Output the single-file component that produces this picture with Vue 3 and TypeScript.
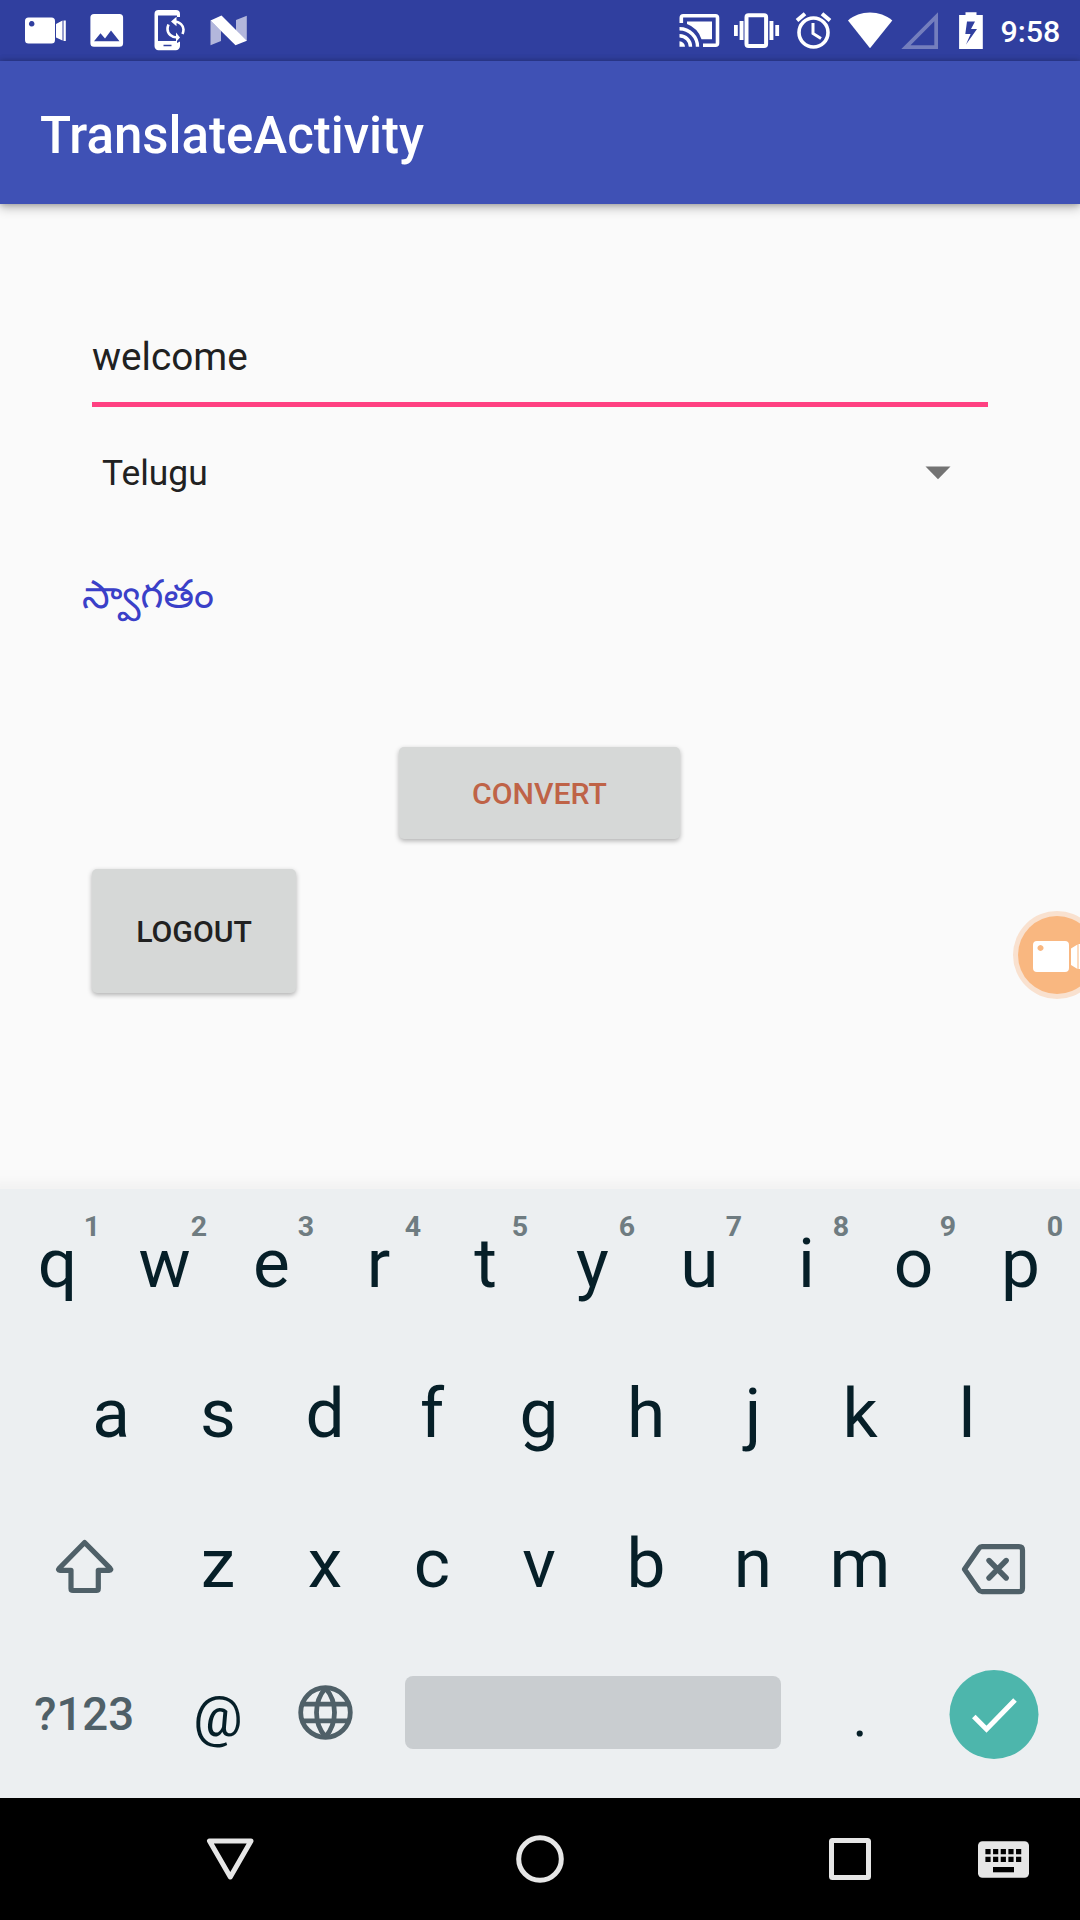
<script setup lang="ts">
import { ref } from 'vue'

interface Key {
  label: string
  hint?: string
}

const phrase = ref('welcome')
const language = ref('Telugu')
const translation = ref('స్వాగతం')

const topRow: Key[] = 'qwertyuiop'.split('').map((label, i) => ({ label, hint: String((i + 1) % 10) }))
const homeRow: Key[] = 'asdfghjkl'.split('').map((label) => ({ label }))
const bottomRow: Key[] = 'zxcvbnm'.split('').map((label) => ({ label }))
</script>

<template>
  <div class="screen">
    <header class="status">
      <div class="icons">
        <svg width="60" height="61" viewBox="20 0 60 61">
          <path fill="#fff" fill-rule="evenodd" d="M28.5 17.5h23a3.5 3.5 0 0 1 3.5 3.5v19a3.5 3.5 0 0 1-3.5 3.5h-23A3.5 3.5 0 0 1 25 40V21a3.500 3.500 0 0 1 3.500-3.500zM31.700 21a2.800 2.800 0 1 0 .01 0zM56 24l6.500-3.500v20L56 37.500zM63.500 20.500h2.300v20.500h-2.300z" />
        </svg>
        <svg width="60" height="61" viewBox="80 0 60 61">
          <path fill="#fff" fill-rule="evenodd" d="M94 14h25.500a3.600 3.600 0 0 1 3.600 3.600v25.600a3.600 3.600 0 0 1-3.600 3.600H94a3.600 3.600 0 0 1-3.600-3.600V17.600A3.600 3.600 0 0 1 94 14zM94 41.300h25.500L111 30.500l-6 8-4.500-5.200z" />
        </svg>
        <svg width="60" height="61" viewBox="140 0 60 61">
          <path fill="#fff" fill-rule="evenodd" d="M158.500 10h17.500a4 4 0 0 1 4 4v3h-3v-1.500h-19V41h19v2l3-1.500V46a4.200 4.200 0 0 1-4.200 4.200h-17.300A4 4 0 0 1 154.500 46V14a4 4 0 0 1 4-4zM163.500 44.700v1.600h8v-1.600z" />
          <g fill="none" stroke="#fff" stroke-width="2.600">
            <path d="M174 21.500c6 0 9.500 4.500 9.500 8 0 1.500-.4 3-1 4.500M177.500 37.500c-6 0-10-4-10-8.500 0-1.500.4-3 1-4.500" />
          </g>
          <path fill="#fff" d="M171 21.500l5.500-4.800v9.600zM180 37.500l-4-5v9.500z" />
        </svg>
        <svg width="60" height="61" viewBox="200 0 60 61">
          <path fill="#b3b7dc" d="M210.500 20.500l10.500 10v10.500l-10.500 4.300zM236 20l10.800-4.300V41L236 30.500z" />
          <path fill="#fff" d="M210.500 20.500L221.500 15.500 246.800 40.700 235.500 45.300z" />
        </svg>
      </div>
      <div class="icons">
        <svg width="56" height="61" viewBox="670 0 56 61">
          <path fill="none" stroke="#fff" stroke-width="3.600" d="M681.300 23v-5.200a2 2 0 0 1 2-2h32.200a2 2 0 0 1 2 2v25.400a2 2 0 0 1-2 2H703" />
          <path fill="#fff" d="M687 21.500h25V39.300h-10.500A24 24 0 0 0 687 24zM679.500 41.300a5.500 5.500 0 0 1 5.500 5.500h-5.500z" />
          <path fill="none" stroke="#fff" stroke-width="3.400" d="M679.500 35.700a11 11 0 0 1 11 11.100M679.500 28.700a18 18 0 0 1 18 18.100" />
        </svg>
        <svg width="62" height="61" viewBox="726 0 62 61">
          <rect x="746.500" y="15.200" width="19.600" height="30.800" rx="2" fill="none" stroke="#fff" stroke-width="4" />
          <path fill="#fff" d="M734 25h3.800v11H734zM739.600 21h3.900v19h-3.900zM769.500 21h3.900v19h-3.900zM775.300 25h3.800v11h-3.800z" />
        </svg>
        <svg width="54" height="61" viewBox="788 0 54 61">
          <circle cx="813.500" cy="32.500" r="14.500" fill="none" stroke="#fff" stroke-width="3.600" />
          <path fill="none" stroke="#fff" stroke-width="3" d="M813 23v10.500l8 5" />
          <path fill="none" stroke="#fff" stroke-width="4" d="M797 20.500l8-6.700M822 13.800l8 6.700" />
        </svg>
        <svg width="54" height="61" viewBox="842 0 54 61">
          <path fill="#fff" d="M870 48.300L848 20.400c6-5 13.500-7.900 22-7.900s16 2.900 22.300 7.900z" />
        </svg>
        <svg width="50" height="61" viewBox="896 0 50 61">
          <path fill="#747ebd" fill-rule="evenodd" d="M938 12.300V49h-36.700zM934.300 21.300L910.500 45.200h23.800z" />
        </svg>
        <svg width="49" height="61" viewBox="946 0 49 61">
          <path fill="#fff" fill-rule="evenodd" d="M965.500 12.300h11V15h6.300v34h-23.700V15h6.400zM967 21.500l-1.700 12.500h5.300L966 44.500 977 29h-6l4-7.500z" />
        </svg>
      </div>
      <span class="clock">9:58</span>
    </header>

    <div class="appbar"><h1>TranslateActivity</h1></div>

    <main class="content">
      <div class="field">{{ phrase }}</div>
      <div class="spinner">
        <span>{{ language }}</span>
        <svg width="26" height="14" viewBox="0 0 26 14"><path fill="#737373" d="M.5.500h25L13 13.200z" /></svg>
      </div>
      <p class="result">{{ translation }}</p>
      <button class="btn convert">CONVERT</button>
      <button class="btn logout">LOGOUT</button>
    </main>

    <svg class="bubble" width="68" height="90" viewBox="1012 910 68 90">
      <circle cx="1057" cy="955" r="44" fill="#f9e1cf" />
      <circle cx="1057" cy="955" r="39" fill="#f9b780" />
      <path fill="#fff" fill-rule="evenodd" d="M1037 941h28a4 4 0 0 1 4 4v23a4 4 0 0 1-4 4h-28a4 4 0 0 1-4-4v-23a4 4 0 0 1 4-4zM1040.500 945a3 3 0 1 0 .01 0zM1071 948.500l6.500-4v24.500l-6.500-4zM1078.500 944h2v25h-2z" />
    </svg>

    <section class="keyboard">
      <div class="row first">
        <div v-for="k in topRow" :key="k.label" class="key">
          {{ k.label }}<span class="hint">{{ k.hint }}</span>
        </div>
      </div>
      <div class="row">
        <div v-for="k in homeRow" :key="k.label" class="key">{{ k.label }}</div>
      </div>
      <div class="row">
        <div class="key wide">
          <svg width="80" height="80" viewBox="44 1523 80 80">
            <path fill="none" stroke="#4f6068" stroke-width="5.200" stroke-linejoin="round" d="M84.600 1542.500L59.300 1568.200Q57.500 1570.300 60 1570.300H71v18.200q0 2 2 2h23.300q2 0 2-2v-18.200h11q2.500 0 .7-2.100z" />
          </svg>
        </div>
        <div v-for="k in bottomRow" :key="k.label" class="key">{{ k.label }}</div>
        <div class="key wide">
          <svg width="80" height="80" viewBox="954.500 1523 80 80">
            <path fill="none" stroke="#4f6068" stroke-width="5.200" stroke-linejoin="round" d="M982.500 1546.700h37q3.500 0 3.500 3.500v38q0 3.500-3.500 3.500h-37q-2 0-3.200-1.800L965 1569.300l14.300-20.800q1.200-1.800 3.200-1.800z" />
            <path fill="none" stroke="#4f6068" stroke-width="5.400" stroke-linecap="round" d="M989.500 1560.500l17.200 17.500M1006.700 1560.500l-17.200 17.500" />
          </svg>
        </div>
      </div>
      <div class="row">
        <div class="key wide symbols">?123</div>
        <div class="key small">@</div>
        <div class="key">
          <svg width="80" height="80" viewBox="285 1673 80 80">
            <g fill="none" stroke="#4f6068" stroke-width="4.800">
              <circle cx="325.500" cy="1712.500" r="24.800" />
              <path d="M303 1704.200h45M303 1720.800h45M325.500 1688q-9 10.500-9 24.500t9 24.500M325.500 1688q9 10.500 9 24.500t-9 24.500" />
            </g>
          </svg>
        </div>
        <div class="key space"><span class="bar"></span></div>
        <div class="key small">.</div>
        <div class="key wide">
          <svg width="100" height="100" viewBox="944.500 1663 100 100">
            <circle cx="994.500" cy="1714.500" r="44.500" fill="#4db6ac" />
            <path fill="none" stroke="#fff" stroke-width="5" d="M974.300 1716.500l12.700 12.800 28.500-29.300" />
          </svg>
        </div>
      </div>
    </section>

    <nav class="navbar">
      <svg width="80" height="122" viewBox="190 1798 80 122">
        <path fill="none" stroke="#e6e6e6" stroke-width="5" stroke-linejoin="round" d="M209.500 1841h41.500l-20.700 36z" />
      </svg>
      <svg width="80" height="122" viewBox="500 1798 80 122">
        <circle cx="540" cy="1859" r="21.300" fill="none" stroke="#e6e6e6" stroke-width="5" />
      </svg>
      <svg width="80" height="122" viewBox="810 1798 80 122">
        <rect x="831.500" y="1840.500" width="37" height="37" rx="1" fill="none" stroke="#e6e6e6" stroke-width="5" />
      </svg>
      <svg class="ime" width="80" height="122" viewBox="964 1798 80 122">
        <rect x="978" y="1841.300" width="51" height="36.500" rx="4.500" fill="#e6e6e6" />
        <path stroke="#000" stroke-width="5.200" stroke-dasharray="5.200 2.460" d="M985.400 1851.600h36M985.400 1859.300h36" />
        <path fill="#000" d="M993 1867h21v5.300h-21z" />
      </svg>
    </nav>
  </div>
</template>

<style>
body {
  margin: 0;
}
</style>

<style scoped>
.screen {
  position: relative;
  display: flex;
  flex-direction: column;
  width: 1080px;
  height: 1920px;
  overflow: hidden;
  background: #fafafa;
  font-family: Roboto, "Noto Sans Telugu", "Noto Sans", sans-serif;
  color: #212121;
}
svg {
  display: block;
  flex: none;
}
.status {
  display: flex;
  height: 61px;
  flex: none;
  padding-left: 20px;
  background: #303f9f;
  color: #fff;
}
.icons {
  display: flex;
}
.icons + .icons {
  margin-left: 410px;
}
.clock {
  margin-left: 5.500px;
  font-size: 30.400px;
  font-weight: 500;
  line-height: 63px;
  white-space: nowrap;
}
.appbar {
  height: 143px;
  flex: none;
  background: #3f51b5;
  box-shadow: 0 0 6px rgba(0, 0, 0, 0.25), 0 4px 10px rgba(0, 0, 0, 0.25);
}
h1 {
  margin: 0;
  padding-left: 40px;
  color: #fff;
  font-size: 51px;
  font-weight: 500;
  line-height: 150px;
}
.content {
  display: flex;
  flex-direction: column;
  align-items: flex-start;
  height: 985px;
  flex: none;
}
.field {
  box-sizing: border-box;
  width: 896px;
  height: 98px;
  margin: 105px 0 0 92px;
  border-bottom: 5px solid #ff4081;
  font-size: 38.700px;
  line-height: 96px;
}
.spinner {
  display: flex;
  align-items: center;
  justify-content: space-between;
  width: 849px;
  height: 60px;
  margin: 36px 0 0 102px;
  font-size: 35.400px;
}
.result {
  margin: 62px 0 0 82px;
  height: 65px;
  color: #3a40c8;
  font-size: 39.300px;
  line-height: 60px;
}
.btn {
  padding: 0;
  border: 0;
  border-radius: 5px;
  background: #d6d8d7;
  box-shadow: 0 2px 5px rgba(0, 0, 0, 0.3);
  color: #212121;
  font: 500 30.200px Roboto, sans-serif;
}
.convert {
  width: 281px;
  height: 92px;
  margin: 117px 0 0 399px;
  color: #bf6347;
}
.logout {
  width: 204px;
  height: 124px;
  margin: 30px 0 0 92px;
}
.bubble {
  position: absolute;
  right: 0;
  top: 910px;
}
.keyboard {
  height: 609px;
  flex: none;
  background: #eceff1;
  box-shadow: 0 -2px 8px 6px rgba(0, 0, 0, 0.03);
}
.row {
  display: flex;
  justify-content: center;
  height: 150px;
  padding-right: 2px;
}
.row.first {
  height: 149px;
}
.key {
  position: relative;
  display: flex;
  align-items: center;
  justify-content: center;
  width: 107px;
  color: #061f28;
  font-size: 69.400px;
}
.hint {
  position: absolute;
  top: 22px;
  right: 9px;
  width: 20px;
  color: #6f7c81;
  font-size: 28.500px;
  font-weight: 700;
  line-height: 31px;
  text-align: center;
}
.wide {
  width: 160.500px;
}
.symbols {
  padding-top: 2px;
  box-sizing: border-box;
  color: #4f6068;
  font-size: 45.600px;
  font-weight: 500;
}
.small {
  padding-top: 7px;
  box-sizing: border-box;
  font-size: 55px;
}
.space {
  width: 428px;
}
.bar {
  width: 376px;
  height: 73px;
  margin-top: -2px;
  border-radius: 8px;
  background: #c9cdd0;
}
.navbar {
  position: relative;
  display: flex;
  height: 122px;
  flex: none;
  padding-left: 190px;
  gap: 230px;
  background: #000;
}
.ime {
  margin-left: -156px;
}
</style>
